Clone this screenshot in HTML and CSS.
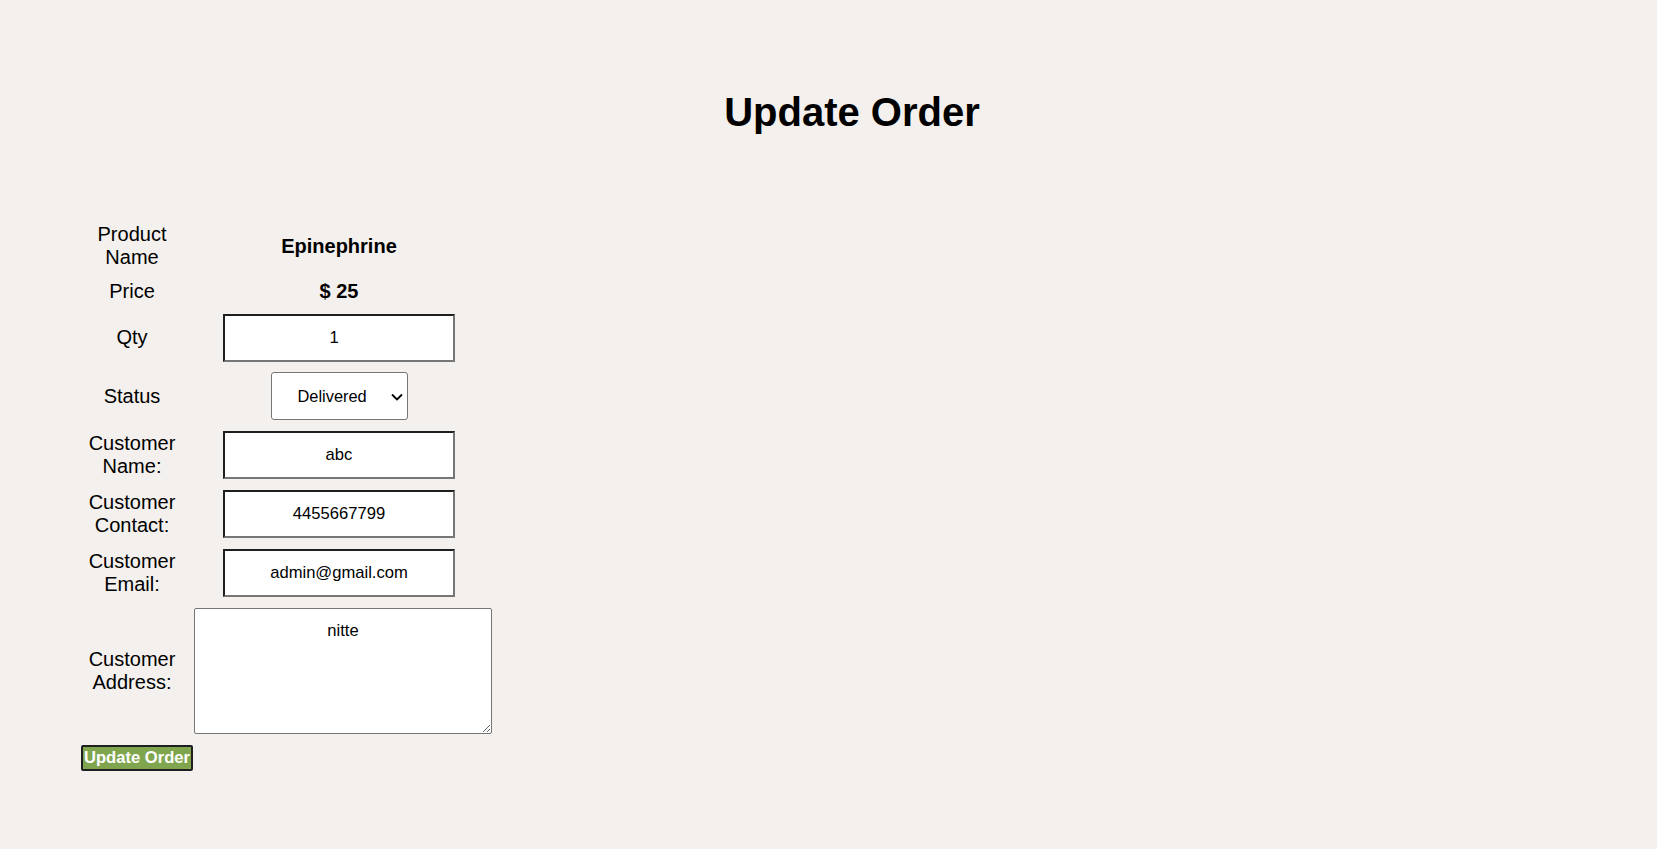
FILE: index.html
```html
<!DOCTYPE html>
<html lang="en">
<head>
<meta charset="utf-8">
<title>Update Order</title>
<link rel="stylesheet" href="styles.css">
</head>
<body>
<div class="page">
  <h1 class="title">Update Order</h1>
  <form class="order-form">
    <div class="grid">
      <div class="label">Product<br>Name</div>
      <div class="value"><b class="strong">Epinephrine</b></div>

      <div class="label">Price</div>
      <div class="value"><b class="strong">$ 25</b></div>

      <div class="label">Qty</div>
      <div class="value"><input class="field field-qty" type="text" value="1"></div>

      <div class="label">Status</div>
      <div class="value">
        <span class="select-wrap">
          <select class="select">
            <option>Pending</option>
            <option selected>Delivered</option>
          </select>
          <svg class="chevron" width="12" height="8" viewBox="0 0 12 8"><path d="M1 1.5 L6 6.5 L11 1.5" fill="none" stroke="#000" stroke-width="1.8"/></svg>
        </span>
      </div>

      <div class="label">Customer<br>Name:</div>
      <div class="value"><input class="field" type="text" value="abc"></div>

      <div class="label">Customer<br>Contact:</div>
      <div class="value"><input class="field" type="text" value="4455667799"></div>

      <div class="label">Customer<br>Email:</div>
      <div class="value"><input class="field" type="text" value="admin@gmail.com"></div>

      <div class="label">Customer<br>Address:</div>
      <div class="value value-wide"><textarea class="area">nitte</textarea></div>
    </div>
    <div class="actions"><button class="btn" type="button">Update Order</button></div>
  </form>
</div>
</body>
</html>
```

FILE: styles.css
```css
html, body {
  margin: 0;
  padding: 0;
  background: #f4f0ed;
}
body {
  font-family: "Liberation Sans", Arial, sans-serif;
  font-size: 20px;
  color: #000;
}
.page {
  min-height: 849px;
}
.title {
  margin: 0;
  padding: 89px 0 0 47px;
  font-size: 40px;
  font-weight: bold;
  line-height: 46px;
  text-align: center;
}
.order-form {
  margin: 88px 0 0 81px;
}
.grid {
  display: grid;
  grid-template-columns: 102px 320px;
  row-gap: 11px;
  align-items: center;
}
.label {
  text-align: center;
  line-height: 23px;
}
.value {
  text-align: center;
  line-height: 23px;
  padding-right: 8px;
  display: flex;
  justify-content: center;
}
.value-wide {
  padding-right: 0;
}
.strong {
  font-weight: bold;
}
.field {
  box-sizing: border-box;
  width: 232px;
  height: 48px;
  margin: 0;
  padding: 0 4px;
  border-style: solid;
  border-width: 2px;
  border-color: #1f1f1f #767676 #767676 #1f1f1f;
  background: #fff;
  font-family: "Liberation Sans", Arial, sans-serif;
  font-size: 16.6px;
  color: #000;
  text-align: center;
}
.field-qty {
  padding: 0 14px 0 4px;
  margin-bottom: -1px;
}
.select-wrap {
  position: relative;
  display: inline-block;
  width: 137px;
  height: 48px;
}
.select {
  appearance: none;
  -webkit-appearance: none;
  box-sizing: border-box;
  width: 137px;
  height: 48px;
  margin: 0;
  padding: 0 0 0 26px;
  border: 1px solid #767676;
  border-radius: 3px;
  background: #fff;
  font-family: "Liberation Sans", Arial, sans-serif;
  font-size: 16.4px;
  color: #000;
}
.chevron {
  position: absolute;
  right: 5px;
  top: 21px;
  pointer-events: none;
}
.area {
  box-sizing: border-box;
  display: block;
  width: 298px;
  height: 126px;
  margin: 0;
  padding: 12px 4px 4px;
  border: 1px solid #767676;
  border-radius: 2px;
  background: #fff;
  font-family: "Liberation Sans", Arial, sans-serif;
  font-size: 16.6px;
  line-height: 19px;
  color: #000;
  text-align: center;
  resize: both;
}
.actions {
  margin-top: 11px;
}
.btn {
  box-sizing: border-box;
  height: 26px;
  margin: 0;
  padding: 1px 1px;
  border: 2px solid #1f1f1f;
  border-radius: 2px;
  background: #7fa64f;
  color: #fff;
  font-family: "Liberation Sans", Arial, sans-serif;
  font-size: 16.6px;
  font-weight: bold;
  line-height: 20px;
}
```
